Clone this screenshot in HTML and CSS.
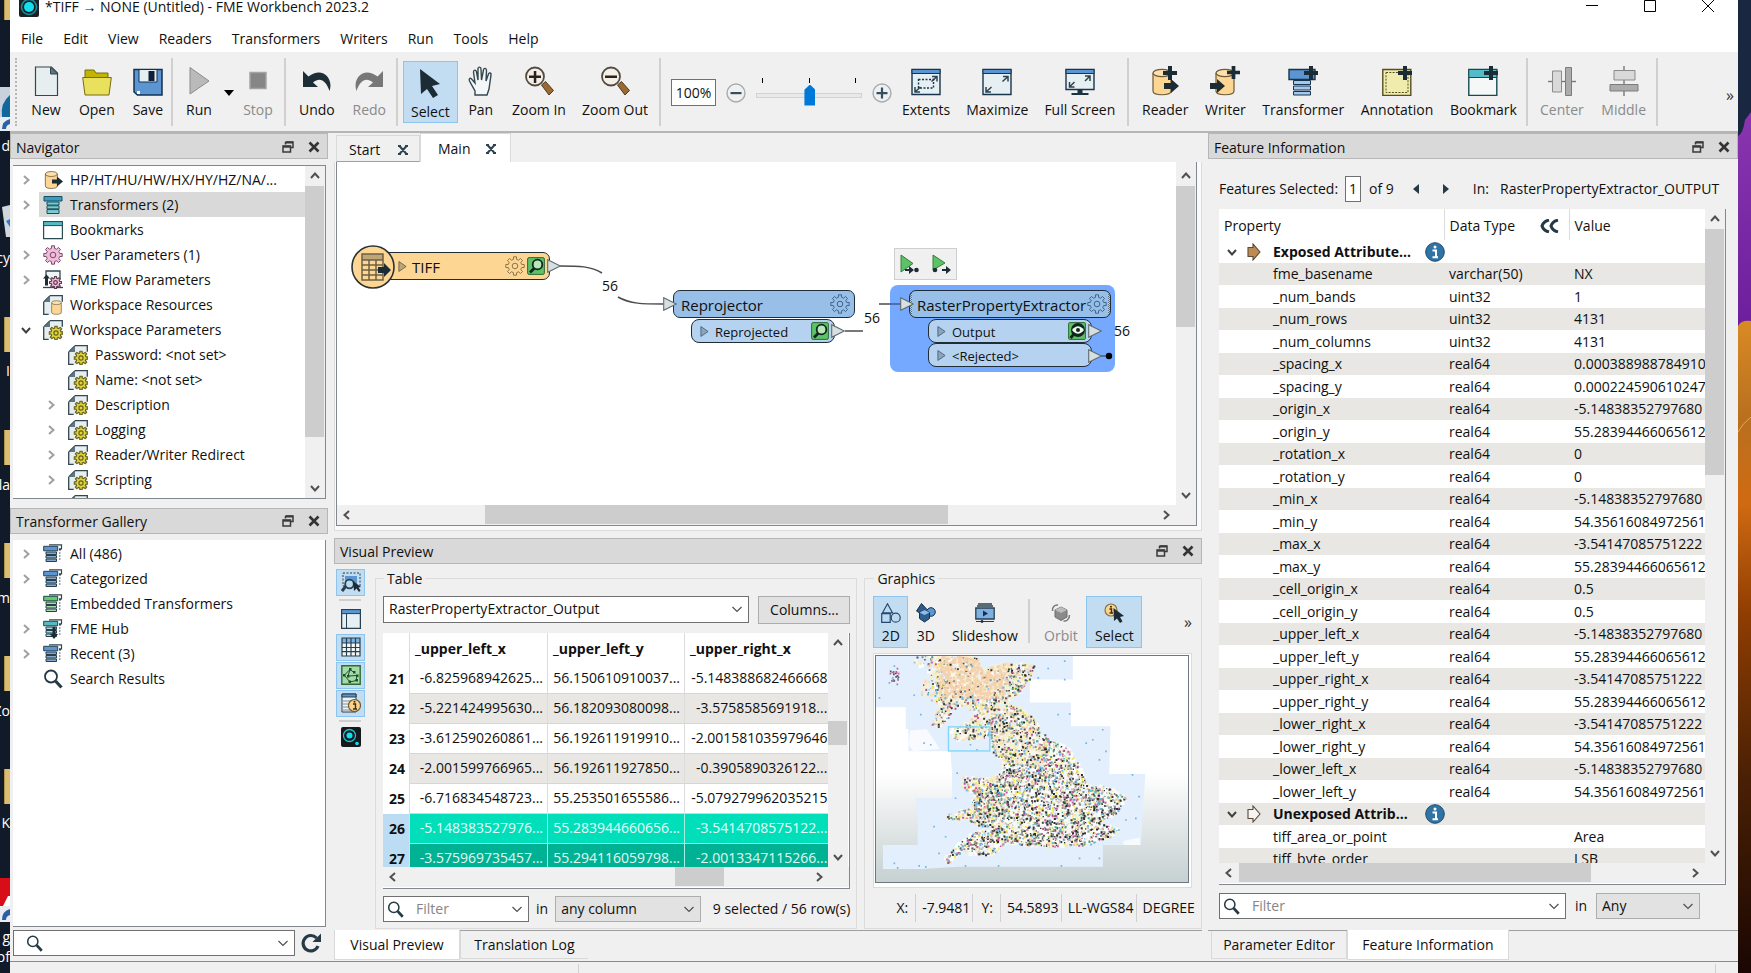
FILE: index.html
```html
<!DOCTYPE html>
<html lang="en">
<head>
<meta charset="utf-8">
<title>*TIFF → NONE (Untitled) - FME Workbench 2023.2</title>
<link rel="stylesheet" href="styles.css">
</head>
<body>
<svg class="sprite" aria-hidden="true">
  <symbol id="i-app" viewBox="0 0 20 20"><rect width="20" height="20" rx="2" fill="#15181c"/><circle cx="8.500" cy="8.500" r="6" fill="none" stroke="#19c5d3" stroke-width="1.300"/><circle cx="8.500" cy="8.500" r="3" fill="#12e0ee"/><circle cx="16" cy="16.500" r="1.800" fill="#12e0ee"/></symbol>
  <symbol id="i-logo" viewBox="0 0 20 20"><rect width="20" height="20" rx="2" fill="#1b2126"/><circle cx="10" cy="10" r="7.500" fill="none" stroke="#15909c" stroke-width="1.500"/><circle cx="10" cy="10" r="5" fill="#12e0ee"/></symbol>
  <symbol id="i-new" viewBox="0 0 30 30"><path d="M4 .7h16l6 6v22.600H4z" transform="translate(.5 .3)" fill="#e6eef0" stroke="#33474f" stroke-width="1.200"/><path d="M19.500 1v7h7z" fill="#5d7682" stroke="#33474f"/></symbol>
  <symbol id="i-open" viewBox="0 0 30 30"><path d="M3 4h9l2 3h12v6H3z" fill="#c2b500" stroke="#756d10"/><path d="M.7 11.500h28.600L27 29H3z" fill="#e9e15e" stroke="#756d10"/></symbol>
  <symbol id="i-save" viewBox="0 0 30 30"><path d="M1 3.500h28V29H4.500L1 26z" fill="#5b96d2" stroke="#14304f" stroke-width="1.500"/><path d="M6 3.500h18v12.500H6z" fill="#e6eef0" stroke="#14304f"/><path d="M15.500 5h6v10h-6z" fill="#0d2038"/><path d="M4 25h3v3H4z" fill="#fff"/></symbol>
  <symbol id="i-run" viewBox="0 0 30 30"><path d="M6 1.500v26.500L25 15z" fill="#bababa" stroke="#8b8b8b"/></symbol>
  <symbol id="i-stop" viewBox="0 0 30 30"><path d="M7 6.500h16v16H7z" fill="#868686" stroke="#a4a4a4" stroke-width="1.500"/></symbol>
  <symbol id="i-undo" viewBox="0 0 30 30"><path d="M1 5v16h15l-5-4.500c7-6 13-2 16.500 8.500C32 12 20 0 6.500 10.500z" fill="#1e2e36"/></symbol>
  <symbol id="i-redo" viewBox="0 0 30 30"><path d="M29 5v16H14l5-4.500C12 10.500 6 14.500 2.500 25-2 12 10 0 23.500 10.500z" fill="#777"/></symbol>
  <symbol id="i-cursor" viewBox="0 0 30 30"><path d="M5 1l1 25 6-5 6 9 5-3-6-9 8-2z" fill="#1c2c34"/></symbol>
  <symbol id="i-pan" viewBox="0 0 30 30"><path d="M9 29v-4L3.500 15c-1-3 1-3.500 2.500-1.500l3 3.500L7.500 6c0-2.500 2.500-2.500 3 0l1.500 8V3c0-2.500 3-2.500 3 0l.5 11L17.500 4c.5-2.500 3-2 3 .5L20 15l2.500-7c.8-2 3-1 2.500 1l-2 14-2 6z" fill="#f4f7f8" stroke="#33474f" stroke-width="1.400"/></symbol>
  <symbol id="i-zoomin" viewBox="0 0 30 30"><path d="M17.500 19l4-3.500 8 9-4.500 4.500z" fill="#9a6a35" stroke="#51381c"/><circle cx="11" cy="10.500" r="9" fill="#f2eee8" stroke="#544a40" stroke-width="1.800"/><path d="M5 9.500h12v2.500H5zM9.800 5h2.500v12H9.800z" fill="#2c211a"/></symbol>
  <symbol id="i-zoomout" viewBox="0 0 30 30"><path d="M17.500 19l4-3.500 8 9-4.500 4.500z" fill="#9a6a35" stroke="#51381c"/><circle cx="11" cy="10.500" r="9" fill="#f2eee8" stroke="#544a40" stroke-width="1.800"/><path d="M5 9.500h12v2.500H5z" fill="#2c211a"/></symbol>
  <symbol id="i-minus" viewBox="0 0 20 20"><circle cx="10" cy="10" r="9" fill="#f0f0f0" stroke="#a5adb0" stroke-width="1.400"/><path d="M4.500 9h11v2.200h-11z" fill="#34505f"/></symbol>
  <symbol id="i-plus" viewBox="0 0 20 20"><circle cx="10" cy="10" r="9" fill="#f0f0f0" stroke="#a5adb0" stroke-width="1.400"/><path d="M4.500 9h11v2.200h-11zM8.900 4.500h2.200v11H8.900z" fill="#34505f"/></symbol>
  <symbol id="i-winarrows" viewBox="0 0 30 30"><path d="M1 3.500h28v25H1z" fill="#e6eff2" stroke="#17354d" stroke-width="1.400"/><path d="M1 3.500h28v4H1z" fill="#5b96d2" stroke="#17354d"/><path d="M21 10.500h5v5M26 10.500l-5.500 5M4 21v5h5M4 26l5.500-5" fill="none" stroke="#2d434f" stroke-width="1.500"/></symbol>
  <symbol id="i-extents" viewBox="0 0 30 30"><use href="#i-winarrows"/><path d="M7.500 13.500h15v8.500h-15z" fill="none" stroke="#17354d" stroke-width="1.400" stroke-dasharray="2 1.500"/></symbol>
  <symbol id="i-full" viewBox="0 0 30 30"><path d="M1 3.500h28v20H1z" fill="#e6eff2" stroke="#17354d" stroke-width="1.400"/><path d="M1 3.500h28v4H1z" fill="#5b96d2" stroke="#17354d"/><path d="M20 10h5v5M25 10l-5 5M4.500 16v5h5M4.500 21l5-5" fill="none" stroke="#2d434f" stroke-width="1.500"/><path d="M12.500 24h5v3h6v2h-17v-2h6z" fill="#1c3442"/></symbol>
  <symbol id="i-cyl" viewBox="0 0 24 28"><path d="M2 5v18c0 5 18 5 18 0V5" fill="#fdd694" stroke="#6b5a3c" stroke-width="1.200"/><ellipse cx="11" cy="5" rx="9" ry="3.700" fill="#fde0ac" stroke="#6b5a3c" stroke-width="1.200"/></symbol>
  <symbol id="i-add" viewBox="0 0 14 14"><path d="M5 0h4v5h5v4H9v5H5V9H0V5h5z" fill="#1c2c34"/></symbol>
  <symbol id="i-reader" viewBox="0 0 30 30"><use href="#i-cyl" x="1" y="2" width="24" height="28"/><use href="#i-add" x="13" y="0" width="14" height="14"/><path d="M14 17h7v-4l8 7-8 7v-4h-7z" fill="#1c2c34"/></symbol>
  <symbol id="i-writer" viewBox="0 0 30 30"><use href="#i-cyl" x="4" y="2" width="24" height="28"/><use href="#i-add" x="17" y="0" width="13" height="13"/><path d="M0 17h7v-4l8 7-8 7v-4H0z" fill="#1c2c34"/></symbol>
  <symbol id="i-trans" viewBox="0 0 30 30"><path d="M1 3.500h26v10H1z" fill="#5b96d2" stroke="#17354d" stroke-width="1.400"/><path d="M5.500 14.500h17v4h-17zM5.500 20h17v4h-17zM5.500 25.500h17v3.500h-17z" fill="#a4c8ee" stroke="#17354d"/><use href="#i-add" x="16" y="0" width="14" height="14"/></symbol>
  <symbol id="i-annot" viewBox="0 0 30 30"><path d="M.8 3.500h28v26h-28z" fill="#f0ecae" stroke="#534f20" stroke-width="1.400"/><path d="M4 6.500h22v20H4z" fill="none" stroke="#534f20" stroke-dasharray="2 1.300"/><use href="#i-add" x="16" y="0" width="14" height="14"/></symbol>
  <symbol id="i-bookm" viewBox="0 0 30 30"><path d="M.8 3.500h28v26h-28z" fill="#f6f8f8" stroke="#174a50" stroke-width="1.400"/><path d="M.8 3.500h28v8h-28z" fill="#54bcc6" stroke="#174a50"/><use href="#i-add" x="16" y="0" width="14" height="14"/></symbol>
  <symbol id="i-center" viewBox="0 0 30 30"><path d="M1 15.500h28" stroke="#777" stroke-width="1.400"/><path d="M5.500 5h9v21h-9z" fill="#d9d9d9" stroke="#8b8b8b"/><path d="M18.500 1.500h6v28h-6z" fill="#acacac" stroke="#7c7c7c"/></symbol>
  <symbol id="i-middle" viewBox="0 0 30 30"><path d="M15 0v30" stroke="#777" stroke-width="1.400"/><path d="M5 4.500h21V14H5z" fill="#d9d9d9" stroke="#8b8b8b"/><path d="M1 18.500h28v6.500H1z" fill="#acacac" stroke="#7c7c7c"/></symbol>
  <symbol id="i-float" viewBox="0 0 12 12"><path d="M3.500 1h7.500v5.500H9M3.500 1v2.500" fill="none" stroke="#3a3a3a" stroke-width="1.500"/><path d="M3.500 1.500h7.500" stroke="#3a3a3a" stroke-width="2"/><path d="M1 5h7.500v6H1z" fill="none" stroke="#3a3a3a" stroke-width="1.500"/><path d="M1 5.700h7.500" stroke="#3a3a3a" stroke-width="2"/></symbol>
  <symbol id="i-x" viewBox="0 0 12 12"><path d="M1.500 1.500l9 9M10.500 1.500l-9 9" stroke="currentColor" stroke-width="2.600"/></symbol>
  <symbol id="i-tabx" viewBox="0 0 12 12"><path d="M2.500 2l7 8M9.500 2l-7 8M1 2h3M8 2h3M1 10h3M8 10h3" stroke="#2d434f" stroke-width="2"/></symbol>
  <symbol id="i-up" viewBox="0 0 12 12"><path d="M2 8l4-4.500L10 8" fill="none" stroke="#505050" stroke-width="2"/></symbol>
  <symbol id="i-down" viewBox="0 0 12 12"><path d="M2 4l4 4.500L10 4" fill="none" stroke="currentColor" stroke-width="2"/></symbol>
  <symbol id="i-left" viewBox="0 0 12 12"><path d="M8 2L3.500 6 8 10" fill="none" stroke="#505050" stroke-width="2"/></symbol>
  <symbol id="i-right" viewBox="0 0 12 12"><path d="M4 2l4.500 4L4 10" fill="none" stroke="currentColor" stroke-width="2"/></symbol>
  <symbol id="i-drop" viewBox="0 0 12 12"><path d="M1.500 4L6 8.500 10.500 4" fill="none" stroke="#505050" stroke-width="1.200"/></symbol>
  <symbol id="i-gear" viewBox="-10 -10 20 20"><path d="M6.600-1.600L9.200-1.500V1.500L6.600 1.600 5.800 3.500 7.500 5.500 5.500 7.500 3.500 5.800 1.600 6.600 1.500 9.200H-1.500L-1.600 6.600-3.500 5.800-5.500 7.500-7.500 5.500-5.800 3.500-6.600 1.600-9.200 1.500V-1.500L-6.600-1.600-5.800-3.500-7.500-5.500-5.500-7.500-3.500-5.800-1.600-6.600-1.500-9.200H1.500L1.600-6.600 3.500-5.800 5.500-7.500 7.500-5.500 5.800-3.500Z" stroke-linejoin="round"/><circle r="2.800"/></symbol>
  <symbol id="i-page" viewBox="0 0 20 20"><path d="M7 .7h12.300V19.300H.7V7z" fill="#e6eef0"/><path d="M7 .7h12.300v6M.7 7v12.300h5M7 .7L.7 7" fill="none" stroke="#33474f" stroke-width="1.300"/><path d="M7 1v6H1z" fill="#5d7682"/></symbol>
  <symbol id="i-wsp" viewBox="0 0 20 20"><use href="#i-page"/><use href="#i-gear" x="5.500" y="5.500" width="15" height="15" fill="#ded53c" stroke="#655f20" stroke-width="1.600"/></symbol>
  <symbol id="i-wsr" viewBox="0 0 20 20"><use href="#i-page"/><use href="#i-cyl" x="7" y="5" width="14" height="15"/></symbol>
  <symbol id="i-flow" viewBox="0 0 20 20"><path d="M3 8V1h14v8" fill="#eef3f4" stroke="#33474f" stroke-width="1.300"/><path d="M0 17.500h20" stroke="#33474f" stroke-width="1.300"/><path d="M3.500 4.500l3.500 4H5v7H2v-7H0z" fill="#1c2c34"/><use href="#i-gear" x="6" y="6" width="13" height="13" fill="#f0bcdc" stroke="#5d3a50" stroke-width="1.800"/></symbol>
  <symbol id="i-rdr" viewBox="0 0 20 20"><use href="#i-cyl" x="1" y="0" width="16" height="20"/><path d="M9 9.500h5v-3l6 5-6 5v-3H9z" fill="#1c2c34"/></symbol>
  <symbol id="i-tr1" viewBox="0 0 20 20"><path d="M1 1.500h18v4.500H1z" fill="#3a9cc0" stroke="#17505f"/><path d="M4 7h12v3H4zM4 10.800h12v3H4zM4 14.600h12v3.900H4z" fill="#7fcbd2" stroke="#17505f"/></symbol>
  <symbol id="i-bk" viewBox="0 0 20 20"><path d="M.6 1.600h18.800v17H.6z" fill="#fff" stroke="#2b4a52" stroke-width="1.200"/><path d="M.6 1.600h18.800v4H.6z" fill="#54bcc6" stroke="#2b4a52"/></symbol>
  <symbol id="i-trs" viewBox="0 0 20 20"><path d="M6 .8h12.500v4H16M16 6h2M16 9h1.500M16 12h1.500M16 15h1.500" fill="none" stroke="#33474f" stroke-width="1.200"/><path d="M.7 2.300h14v4.500H.7z" fill="var(--c1)" stroke="#26404f"/><path d="M3 8h10.500v2.500H3zM3 11.500h10.500V14H3zM3 15h10.500v2.500H3z" fill="var(--c2)" stroke="#26404f"/></symbol>
  <symbol id="i-search" viewBox="0 0 20 20"><path d="M12.500 12l6 6.500" stroke="#253a45" stroke-width="3.200"/><circle cx="8" cy="7.500" r="6" fill="none" stroke="#253a45" stroke-width="1.800"/></symbol>
  <symbol id="i-refresh" viewBox="0 0 20 20"><path d="M17 13a7.700 7.700 0 1 1-1.500-8" fill="none" stroke="#253a45" stroke-width="3.200"/><path d="M20 .5v8.500h-8.500z" fill="#253a45"/></symbol>
  <symbol id="i-mag" viewBox="0 0 18 18"><rect x=".6" y=".6" width="16.800" height="16.800" rx="1.500" fill="#5bc266" stroke="#2f6b35"/><path d="M7.500 11l-4.500 4.500" stroke="#12251c" stroke-width="2.800"/><circle cx="10.500" cy="7.500" r="4.800" fill="#b6e6bb" stroke="#12251c" stroke-width="1.800"/></symbol>
  <symbol id="i-eye" viewBox="0 0 18 18"><rect x=".6" y=".6" width="16.800" height="16.800" rx="1" fill="#5bc266" stroke="#2f6b35"/><path d="M6 12l-3.500 4" stroke="#12251c" stroke-width="2.800"/><circle cx="10" cy="8" r="7" fill="#12251c"/><path d="M4 8q6-7.500 12 0q-6 7.500-12 0z" fill="#e8fbe9"/><circle cx="10" cy="8" r="2" fill="#12251c"/></symbol>
  <symbol id="i-tri" viewBox="0 0 10 14"><path d="M1 1.500v11L9 7z"/></symbol>
  <symbol id="i-port" viewBox="0 0 14 14"><path d="M.7.7v12.600L13.300 7z" fill="#d8dfe0" stroke="#5d6c70" stroke-width="1.100"/></symbol>
  <symbol id="i-runto" viewBox="0 0 20 20"><path d="M1 1v17l12-8.500z" fill="#5bc266" stroke="#3c7a42"/><path d="M5 15h4v-3l5 4-5 4v-3H5z" fill="#1c2c34"/><circle cx="16.500" cy="16" r="2.300" fill="#1c2c34"/></symbol>
  <symbol id="i-runfrom" viewBox="0 0 20 20"><path d="M2 1v15l12-7z" fill="#5bc266" stroke="#3c7a42"/><circle cx="4" cy="16" r="2.300" fill="#1c2c34"/><path d="M11 15h4v-3l5 4-5 4v-3h-4z" fill="#1c2c34"/></symbol>
  <symbol id="i-pick" viewBox="0 0 20 20"><path d="M4 4h12v8H4z" fill="#5b96d2"/><path d="M2 1h17v13H2z" fill="none" stroke="#26404f" stroke-dasharray="2 1.500"/><path d="M5 14l-4 5" stroke="#26404f" stroke-width="3"/><circle cx="8.500" cy="12" r="4.300" fill="#bcd9ee" stroke="#26404f" stroke-width="1.800"/><path d="M12 9l1 10 2.500-2.500L18 20l1.500-1.500-2-3 2.500-.5z" fill="#1c2c34"/></symbol>
  <symbol id="i-pane" viewBox="0 0 20 20"><path d="M.6.600h18.800v18.800H.6z" fill="#e6eff2" stroke="#26404f" stroke-width="1.300"/><path d="M.6.600h18.800v4H.6z" fill="#5b96d2" stroke="#26404f"/><path d="M5.500 5v14" stroke="#26404f"/></symbol>
  <symbol id="i-grid" viewBox="0 0 20 20"><path d="M1 1h18v18H1z" fill="#f6f8f8"/><path d="M1 1h18v5H1z" fill="#7eb0e2"/><path d="M1 1h18v18H1zM1 6h18M1 10.500h18M1 14.700h18M5.500 1v18M10 1v18M14.500 1v18" fill="none" stroke="#26404f" stroke-width="1.200"/></symbol>
  <symbol id="i-gfx" viewBox="0 0 20 20"><path d="M.8.800h18.400v18.400H.8z" fill="#a3dba8" stroke="#2f6b35" stroke-width="1.400"/><path d="M3 10.500l6-6 4 3M9 4.500L7 11l9-.5-1 5-6 1.500-5.500-6.500" fill="none" stroke="#20502a" stroke-width="1"/><path d="M2 9h2.500v2.500H2zM8 3h2.500v2.500H8zM12 6h2.500v2.500H12zM15 9.500h2.500V12H15zM14.500 14H17v2.500h-2.500zM7.500 15.500H10V18H7.500zM6 10h2.500v2.500H6z" fill="#20502a"/></symbol>
  <symbol id="i-info" viewBox="0 0 20 20"><path d="M1 1h14v18H1z" fill="#f0f3f5" stroke="#26404f"/><path d="M1 1h14v3H1z" fill="#5b96d2" stroke="#26404f"/><path d="M2 8h8M2 11h6M2 14h6M2 17h8" stroke="#7c8c93"/><circle cx="13.500" cy="12.500" r="6" fill="#fbd38b" stroke="#6b5a3c" stroke-width="1.200"/><path d="M12 11h2.500v5M12 16h4" fill="none" stroke="#3a2e14" stroke-width="1.400"/><circle cx="13.500" cy="8.800" r="1" fill="#3a2e14"/></symbol>
  <symbol id="i-2d" viewBox="0 0 20 20"><path d="M6.500.8l5 9h-10zM.7 10.700h8.500v8.600H.7z" fill="#bcd9f2" stroke="#26486b" stroke-width="1.200"/><circle cx="14.700" cy="14.700" r="4.500" fill="#bcd9f2" stroke="#26486b" stroke-width="1.200"/></symbol>
  <symbol id="i-3d" viewBox="0 0 20 20"><circle cx="15" cy="9" r="4.300" fill="#5b96d2" stroke="#17304a"/><path d="M5.500.5l5.500 6-5 5L.5 8z" fill="#2d5c8c" stroke="#17304a"/><path d="M8.500 7l5 2.500v6l-5 3.500-5-3.500v-6z" fill="#2f5f8e" stroke="#17304a"/><path d="M8.500 7l5 2.500-5 2.500-5-2.500z" fill="#8cbcf0"/></symbol>
  <symbol id="i-slide" viewBox="0 0 20 20"><path d="M3 1h14M2 3h16" stroke="#26404f" stroke-width="1.300"/><path d="M.8 5h18.400v11H.8z" fill="#7eb0e2" stroke="#26404f" stroke-width="1.300"/><path d="M8 7.500v6l5-3z" fill="#17304a"/><path d="M1 18.500h18" stroke="#26404f"/><circle cx="7" cy="18.500" r="1.400" fill="#17304a"/></symbol>
  <symbol id="i-orbit" viewBox="0 0 20 20"><path d="M10 4l6 3v7l-6 3.500L4 14V7z" fill="#8a8a8a" stroke="#6f6f6f"/><path d="M10 4l6 3-6 3-6-3z" fill="#bcbcbc"/><path d="M1.500 8C1 4 4 1.500 7 2M18.500 12c0 4-3 6.500-6 6" fill="none" stroke="#777" stroke-width="1.500"/></symbol>
  <symbol id="i-isel" viewBox="0 0 20 20"><circle cx="7" cy="7" r="6" fill="#fbd38b" stroke="#8a744a" stroke-width="1.200"/><path d="M5.500 6h2v4M5.500 10h3.500" fill="none" stroke="#3a2e14" stroke-width="1.400"/><circle cx="7" cy="3.700" r="1" fill="#3a2e14"/><path d="M9.500 5l.5 13 3-2.500 3 4.500 2.500-1.500-2.500-4.500 4-1z" fill="#1c2c34"/></symbol>
  <symbol id="i-infob" viewBox="0 0 20 20"><circle cx="10" cy="10" r="9.300" fill="#2f74a5" stroke="#1c4a6c"/><path d="M7.500 8.500H11V15M7.500 15.200H13" fill="none" stroke="#fff" stroke-width="2"/><circle cx="10" cy="5" r="1.500" fill="#fff"/></symbol>
  <symbol id="i-exp" viewBox="0 0 14 18"><path d="M1 4.500h5V1l7 8-7 8v-3.500H1z" stroke="#5a4a38" stroke-width="1.100"/></symbol>
</svg>

<div class="desktop">
  <aside class="strip-left" aria-hidden="true">
    <span class="folder f1"></span><span class="folder f2"></span><span class="folder f3"></span>
    <span class="folder f4"></span><span class="folder f5"></span><span class="folder f6"></span>
    <svg class="badge b1" viewBox="0 0 10 44"><path d="M0 0h10v30H0z" fill="#c9d2dc"/><path d="M10 8Q0 16 2 30h8z" fill="#12679c"/><path d="M0 30h10v14H0z" fill="#e9edf2"/><path d="M10 32Q2 34 2 42h4q0-4 4-5z" fill="#2d5fa5"/></svg>
    <svg class="badge b2" viewBox="0 0 10 32"><path d="M2 2l8-2v32H6z" fill="#cfd6dc"/><path d="M6 16l4-2v8z" fill="#2d7bd0"/></svg>
    <svg class="badge b3" viewBox="0 0 10 44"><path d="M0 0h10v28H0z" fill="#d80d18"/><path d="M3 28l5-10h2v10z" fill="#fff"/><path d="M0 28h10v16H0z" fill="#e9edf2"/><path d="M10 31Q2 33 2 42h4q0-4 4-5z" fill="#2d5fa5"/></svg>
    <span class="dl t1">d</span><span class="dl t2">cy</span><span class="dl t3">I</span><span class="dl t4">la</span><span class="dl t5">m</span><span class="dl t6">Zo</span><span class="dl t7">K</span><span class="dl t8">g</span><span class="dl t9">of</span>
  </aside>

  <div class="window">
    <header class="titlebar">
      <svg class="ic20"><use href="#i-logo"/></svg>
      <h1>*TIFF → NONE (Untitled) - FME Workbench 2023.2</h1>
      <div class="winbtns">
        <button aria-label="Minimize"><svg viewBox="0 0 12 14"><path d="M0 5.500h12" stroke="#000"/></svg></button>
        <button aria-label="Restore"><svg viewBox="0 0 12 14"><path d="M.5.500h11v11H.5z" fill="none" stroke="#000"/></svg></button>
        <button aria-label="Close"><svg viewBox="0 0 12 14"><path d="M0 0l12 12M12 0L0 12" stroke="#000"/></svg></button>
      </div>
    </header>
    <nav class="menu">
      <button>File</button><button>Edit</button><button>View</button><button>Readers</button><button>Transformers</button><button>Writers</button><button>Run</button><button>Tools</button><button>Help</button>
    </nav>

    <div class="toolbar">
      <div class="group g-file">
        <button><svg><use href="#i-new"/></svg>New</button>
        <button><svg><use href="#i-open"/></svg>Open</button>
        <button><svg><use href="#i-save"/></svg>Save</button>
      </div>
      <div class="group g-run">
        <button><svg><use href="#i-run"/></svg>Run</button>
        <button class="caret" aria-label="Run options"><svg class="caret-ic" viewBox="0 0 10 6"><path d="M0 0h10L5 6z"/></svg></button>
        <button disabled><svg><use href="#i-stop"/></svg>Stop</button>
      </div>
      <div class="group g-undo">
        <button><svg><use href="#i-undo"/></svg>Undo</button>
        <button disabled><svg><use href="#i-redo"/></svg>Redo</button>
      </div>
      <div class="group g-nav">
        <button class="on"><svg><use href="#i-cursor"/></svg>Select</button>
        <button><svg><use href="#i-pan"/></svg>Pan</button>
        <button><svg><use href="#i-zoomin"/></svg>Zoom In</button>
        <button><svg><use href="#i-zoomout"/></svg>Zoom Out</button>
      </div>
      <div class="group g-zoom">
        <input class="pct" type="text" value="100%" aria-label="Zoom level">
        <button class="round" aria-label="Zoom out"><svg class="ic20"><use href="#i-minus"/></svg></button>
        <div class="slider"><div class="ticks"><i></i><i></i><i></i></div><input type="range" aria-label="Zoom" min="0" max="100" value="51"></div>
        <button class="round" aria-label="Zoom in"><svg class="ic20"><use href="#i-plus"/></svg></button>
        <button><svg><use href="#i-extents"/></svg>Extents</button>
        <button><svg><use href="#i-winarrows"/></svg>Maximize</button>
        <button><svg><use href="#i-full"/></svg>Full Screen</button>
      </div>
      <div class="group g-add">
        <button><svg><use href="#i-reader"/></svg>Reader</button>
        <button><svg><use href="#i-writer"/></svg>Writer</button>
        <button><svg><use href="#i-trans"/></svg>Transformer</button>
        <button><svg><use href="#i-annot"/></svg>Annotation</button>
        <button><svg><use href="#i-bookm"/></svg>Bookmark</button>
      </div>
      <div class="group g-align">
        <button disabled><svg><use href="#i-center"/></svg>Center</button>
        <button disabled><svg><use href="#i-middle"/></svg>Middle</button>
      </div>
      <button class="more" aria-label="More tools">»</button>
    </div>

    <main class="docks">
      <section class="col left">
        <header class="dock-head"><h2>Navigator</h2><button aria-label="Float"><svg><use href="#i-float"/></svg></button><button aria-label="Close"><svg><use href="#i-x"/></svg></button></header>
        <div class="panel nav-panel">
          <ul class="tree">
            <li><svg class="ch"><use href="#i-right"/></svg><svg class="ic20"><use href="#i-rdr"/></svg><span>HP/HT/HU/HW/HX/HY/HZ/NA/...</span></li>
            <li class="sel"><svg class="ch"><use href="#i-right"/></svg><svg class="ic20"><use href="#i-tr1"/></svg><span>Transformers (2)</span></li>
            <li><i class="ch"></i><svg class="ic20"><use href="#i-bk"/></svg><span>Bookmarks</span></li>
            <li><svg class="ch"><use href="#i-right"/></svg><svg class="ic20 pink"><use href="#i-gear"/></svg><span>User Parameters (1)</span></li>
            <li><svg class="ch"><use href="#i-right"/></svg><svg class="ic20"><use href="#i-flow"/></svg><span>FME Flow Parameters</span></li>
            <li><i class="ch"></i><svg class="ic20"><use href="#i-wsr"/></svg><span>Workspace Resources</span></li>
            <li><svg class="ch open"><use href="#i-down"/></svg><svg class="ic20"><use href="#i-wsp"/></svg><span>Workspace Parameters</span></li>
            <li class="sub"><i class="ch"></i><svg class="ic20"><use href="#i-wsp"/></svg><span>Password: &lt;not set&gt;</span></li>
            <li class="sub"><i class="ch"></i><svg class="ic20"><use href="#i-wsp"/></svg><span>Name: &lt;not set&gt;</span></li>
            <li class="sub"><svg class="ch"><use href="#i-right"/></svg><svg class="ic20"><use href="#i-wsp"/></svg><span>Description</span></li>
            <li class="sub"><svg class="ch"><use href="#i-right"/></svg><svg class="ic20"><use href="#i-wsp"/></svg><span>Logging</span></li>
            <li class="sub"><svg class="ch"><use href="#i-right"/></svg><svg class="ic20"><use href="#i-wsp"/></svg><span>Reader/Writer Redirect</span></li>
            <li class="sub"><svg class="ch"><use href="#i-right"/></svg><svg class="ic20"><use href="#i-wsp"/></svg><span>Scripting</span></li>
            <li class="sub"><i class="ch"></i><svg class="ic20"><use href="#i-wsp"/></svg></li>
          </ul>
          <div class="sb v sb-nav"><svg><use href="#i-up"/></svg><div class="track"><div class="thumb"></div></div><svg><use href="#i-down"/></svg></div>
        </div>
        <header class="dock-head second"><h2>Transformer Gallery</h2><button aria-label="Float"><svg><use href="#i-float"/></svg></button><button aria-label="Close"><svg><use href="#i-x"/></svg></button></header>
        <div class="panel gal-panel">
          <ul class="tree">
            <li><svg class="ch"><use href="#i-right"/></svg><svg class="ic20 blue"><use href="#i-trs"/></svg><span>All (486)</span></li>
            <li><svg class="ch"><use href="#i-right"/></svg><svg class="ic20 blue"><use href="#i-trs"/></svg><span>Categorized</span></li>
            <li><i class="ch"></i><svg class="ic20 green"><use href="#i-trs"/></svg><span>Embedded Transformers</span></li>
            <li><svg class="ch"><use href="#i-right"/></svg><svg class="ic20 teal"><use href="#i-trs"/><path d="M9.500 8h3v7h2.500l-4 5-4-5h2.500z" fill="#1c2c34"/></svg><span>FME Hub</span></li>
            <li><svg class="ch"><use href="#i-right"/></svg><svg class="ic20 blue"><use href="#i-trs"/></svg><span>Recent (3)</span></li>
            <li><i class="ch"></i><svg class="ic20"><use href="#i-search"/></svg><span>Search Results</span></li>
          </ul>
        </div>
        <div class="gal-search">
          <label class="field"><svg class="ic20"><use href="#i-search"/></svg><input type="text" aria-label="Search transformers"><svg class="dr"><use href="#i-drop"/></svg></label>
          <button aria-label="Refresh"><svg class="ic20"><use href="#i-refresh"/></svg></button>
        </div>
      </section>

      <section class="col mid">
        <div class="doc-tabs">
          <button class="doc-tab start">Start <svg><use href="#i-tabx"/></svg></button>
          <button class="doc-tab active">Main <svg><use href="#i-tabx"/></svg></button>
        </div>
        <div class="canvas-frame"><div class="canvas-pane">
          <div class="canvas">
            <svg class="wires"><path d="M222 104c20 0 32 0 43 7M281 135c12 7 25 7 45 7M508 169h18M542 142h12" fill="none" stroke="#4c4c4c" stroke-width="1.500"/></svg>
            <div class="node tiff"><svg class="ic-tri brown"><use href="#i-tri"/></svg><span>TIFF</span><svg class="ic20 gear-o"><use href="#i-gear"/></svg><svg class="ic18"><use href="#i-mag"/></svg></div>
            <svg class="disc" viewBox="0 0 44 44"><circle cx="22" cy="22" r="21" fill="#fdd694" stroke="#2b3236" stroke-width="1.600"/><path d="M11 9h21v6H11z" fill="#bda778"/><path d="M11 9h21v26H11zM11 15h21M11 20h21M11 25h21M11 30h21M18 15v20M25 15v20" fill="none" stroke="#6e6045" stroke-width="1.500"/><path d="M27 22h6v-4l7 7-7 7v-4h-6z" fill="#1c2c34"/></svg>
            <svg class="port p1"><use href="#i-port"/></svg>
            <span class="cnt c1">56</span>
            <div class="node rep"><span>Reprojector</span><svg class="ic20 gear-b"><use href="#i-gear"/></svg></div>
            <svg class="port p2"><use href="#i-port"/></svg>
            <div class="node out rep-out"><svg class="ic-tri"><use href="#i-tri"/></svg><span>Reprojected</span><svg class="ic18"><use href="#i-mag"/></svg></div>
            <svg class="port p3"><use href="#i-port"/></svg>
            <span class="cnt c2">56</span>
            <div class="mini"><button aria-label="Run to this"><svg class="ic20"><use href="#i-runto"/></svg></button><button aria-label="Run from this"><svg class="ic20"><use href="#i-runfrom"/></svg></button></div>
            <div class="halo"></div>
            <svg class="wires"><path d="M553 142h12M764 194h8" stroke="#3b5d92" stroke-width="1.500"/><circle cx="772" cy="194" r="3.200"/></svg>
            <div class="node rpe"><span>RasterPropertyExtractor</span><svg class="ic20 gear-b"><use href="#i-gear"/></svg></div>
            <svg class="port p4"><use href="#i-port"/></svg>
            <div class="node out rpe-out"><svg class="ic-tri"><use href="#i-tri"/></svg><span>Output</span><svg class="ic18"><use href="#i-eye"/></svg></div>
            <div class="node out rpe-rej"><svg class="ic-tri"><use href="#i-tri"/></svg><span>&lt;Rejected&gt;</span></div>
            <svg class="port p5"><use href="#i-port"/></svg>
            <svg class="port p6"><use href="#i-port"/></svg>
            <span class="cnt c3">56</span>
          </div>
          <div class="sb v sb-cv"><svg><use href="#i-up"/></svg><div class="track"><div class="thumb"></div></div><svg><use href="#i-down"/></svg></div>
          <div class="sb h sb-ch"><svg><use href="#i-left"/></svg><div class="track"><div class="thumb"></div></div><svg><use href="#i-right"/></svg></div>
        </div></div>

        <header class="dock-head third"><h2>Visual Preview</h2><button aria-label="Float"><svg><use href="#i-float"/></svg></button><button aria-label="Close"><svg><use href="#i-x"/></svg></button></header>
        <div class="preview">
          <div class="vtools">
            <button class="on" aria-label="Inspect selection"><svg class="ic20"><use href="#i-pick"/></svg></button><hr>
            <button aria-label="Display control"><svg class="ic20"><use href="#i-pane"/></svg></button>
            <button class="on" aria-label="Table"><svg class="ic20"><use href="#i-grid"/></svg></button>
            <button class="on" aria-label="Graphics"><svg class="ic20"><use href="#i-gfx"/></svg></button>
            <button class="on" aria-label="Feature information"><svg class="ic20"><use href="#i-info"/></svg></button><hr>
            <button class="app" aria-label="Data Inspector"><svg class="ic20"><use href="#i-app"/></svg></button>
          </div>
          <fieldset class="box tbl"><legend>Table</legend>
            <div class="row1">
              <div class="combo white"><select aria-label="Feature type"><option>RasterPropertyExtractor_Output</option></select><svg class="dr"><use href="#i-drop"/></svg></div>
              <button class="push">Columns...</button>
            </div>
            <div class="grid-box">
              <div class="clip"><table class="grid">
                <colgroup><col class="cn"><col class="ca"><col class="cb"><col class="cc"></colgroup>
                <thead><tr><th></th><th>_upper_left_x</th><th>_upper_left_y</th><th>_upper_right_x</th></tr></thead>
                <tbody>
                <tr><th>21</th><td>-6.825968942625...</td><td>56.150610910037...</td><td>-5.148388682466668</td></tr>
                <tr><th>22</th><td>-5.221424995630...</td><td>56.182093080098...</td><td>-3.5758585691918...</td></tr>
                <tr><th>23</th><td>-3.612590260861...</td><td>56.192611919910...</td><td>-2.001581035979646</td></tr>
                <tr><th>24</th><td>-2.001599766965...</td><td>56.192611927850...</td><td>-0.3905890326122...</td></tr>
                <tr><th>25</th><td>-6.716834548723...</td><td>55.253501655586...</td><td>-5.079279962035215</td></tr>
                <tr class="s1"><th>26</th><td>-5.148383527976...</td><td>55.283944660656...</td><td>-3.5414708575122...</td></tr>
                <tr class="s2"><th>27</th><td>-3.575969735457...</td><td>55.294116059798...</td><td>-2.0013347115266...</td></tr>
                </tbody>
              </table></div>
              <div class="sb v sb-tv"><svg><use href="#i-up"/></svg><div class="track"><div class="thumb"></div></div><svg><use href="#i-down"/></svg></div>
              <div class="sb h sb-th"><svg><use href="#i-left"/></svg><div class="track"><div class="thumb"></div></div><svg><use href="#i-right"/></svg></div>
            </div>
            <div class="row3">
              <label class="field"><svg class="ic20"><use href="#i-search"/></svg><input type="text" placeholder="Filter" aria-label="Filter rows"><svg class="dr"><use href="#i-drop"/></svg></label>
              <span>in</span>
              <div class="combo"><select aria-label="Filter column"><option>any column</option></select><svg class="dr"><use href="#i-drop"/></svg></div>
              <span class="count">9 selected / 56 row(s)</span>
            </div>
          </fieldset>
          <fieldset class="box gfx"><legend>Graphics</legend>
            <div class="gtools">
              <button class="on"><svg class="ic20"><use href="#i-2d"/></svg>2D</button>
              <button><svg class="ic20"><use href="#i-3d"/></svg>3D</button>
              <button class="slide"><svg class="ic20"><use href="#i-slide"/></svg>Slideshow</button>
              <i class="vsep"></i>
              <button disabled><svg class="ic20"><use href="#i-orbit"/></svg>Orbit</button>
              <button class="on wide"><svg class="ic20"><use href="#i-isel"/></svg>Select</button>
              <button class="more" aria-label="More">»</button>
            </div>
            <div class="map-frame">
              <svg class="map" id="map" viewBox="47 377 942 676" preserveAspectRatio="none" role="img" aria-label="Map of Great Britain raster tiles">
                <path fill="#e3effd" d="M47 377H642V447H512V516H636V587H756L752 730H861L848 942H733V1007H295L185 1014H68V942H173V860L165 801H277V730L272 662H145V595H137V530H47Z"/>
                <path fill="#f8fafd" d="M150 600l50-5 20 30 20 30-80 7-15-20zM795 930l50-10v22h-50z"/>
                <g id="land"></g>
                <rect x="266" y="589" width="125" height="72" fill="none" stroke="#7fd6fb" stroke-width="4"/>
              </svg>
            </div>
            <div class="coords"><span class="k">X:</span><span class="n">-7.9481</span><span class="k">Y:</span><span class="n">54.5893</span><span>LL-WGS84</span><span>DEGREE</span></div>
          </fieldset>
        </div>
        <div class="bottom-tabs mid-tabs"><button class="btab active">Visual Preview</button><button class="btab log">Translation Log</button></div>
      </section>

      <section class="col right">
        <header class="dock-head"><h2>Feature Information</h2><button aria-label="Float"><svg><use href="#i-float"/></svg></button><button aria-label="Close"><svg><use href="#i-x"/></svg></button></header>
        <div class="feat-bar">
          <label for="fnum">Features Selected:</label><input id="fnum" type="text" value="1"><span>of 9</span>
          <button class="prev" aria-label="Previous"><svg viewBox="0 0 6 10"><path d="M6 0v10L0 5z" fill="#253a45"/></svg></button>
          <button aria-label="Next"><svg viewBox="0 0 6 10"><path d="M0 0v10l6-5z" fill="#253a45"/></svg></button>
          <span class="in">In:</span><span>RasterPropertyExtractor_OUTPUT</span>
        </div>
        <div class="prop-box">
          <div class="clip"><table class="props">
            <colgroup><col class="cp"><col class="ct"><col class="cv"></colgroup>
            <thead><tr><th>Property</th><th><div class="dt">Data Type<button aria-label="Collapse"><svg viewBox="0 0 20 14"><path d="M9 1C5 2 3 4 2 7c1 3 3 5 7 6M18 1c-4 1-6 3-7 6 1 3 3 5 7 6" fill="none" stroke="#253a45" stroke-width="3"/></svg></button></div></th><th>Value</th></tr></thead>
            <tbody>
            <tr class="cat"><td colspan="3"><div><svg class="ch open"><use href="#i-down"/></svg><svg class="ex filled"><use href="#i-exp"/></svg><b>Exposed Attribute...</b><svg class="ic20"><use href="#i-infob"/></svg></div></td></tr>
            <tr><td>fme_basename</td><td>varchar(50)</td><td>NX</td></tr>
            <tr><td>_num_bands</td><td>uint32</td><td>1</td></tr>
            <tr><td>_num_rows</td><td>uint32</td><td>4131</td></tr>
            <tr><td>_num_columns</td><td>uint32</td><td>4131</td></tr>
            <tr><td>_spacing_x</td><td>real64</td><td>0.000388988784910</td></tr>
            <tr><td>_spacing_y</td><td>real64</td><td>0.000224590610247</td></tr>
            <tr><td>_origin_x</td><td>real64</td><td>-5.14838352797680</td></tr>
            <tr><td>_origin_y</td><td>real64</td><td>55.28394466065612</td></tr>
            <tr><td>_rotation_x</td><td>real64</td><td>0</td></tr>
            <tr><td>_rotation_y</td><td>real64</td><td>0</td></tr>
            <tr><td>_min_x</td><td>real64</td><td>-5.14838352797680</td></tr>
            <tr><td>_min_y</td><td>real64</td><td>54.35616084972561</td></tr>
            <tr><td>_max_x</td><td>real64</td><td>-3.54147085751222</td></tr>
            <tr><td>_max_y</td><td>real64</td><td>55.28394466065612</td></tr>
            <tr><td>_cell_origin_x</td><td>real64</td><td>0.5</td></tr>
            <tr><td>_cell_origin_y</td><td>real64</td><td>0.5</td></tr>
            <tr><td>_upper_left_x</td><td>real64</td><td>-5.14838352797680</td></tr>
            <tr><td>_upper_left_y</td><td>real64</td><td>55.28394466065612</td></tr>
            <tr><td>_upper_right_x</td><td>real64</td><td>-3.54147085751222</td></tr>
            <tr><td>_upper_right_y</td><td>real64</td><td>55.28394466065612</td></tr>
            <tr><td>_lower_right_x</td><td>real64</td><td>-3.54147085751222</td></tr>
            <tr><td>_lower_right_y</td><td>real64</td><td>54.35616084972561</td></tr>
            <tr><td>_lower_left_x</td><td>real64</td><td>-5.14838352797680</td></tr>
            <tr><td>_lower_left_y</td><td>real64</td><td>54.35616084972561</td></tr>
            <tr class="cat"><td colspan="3"><div><svg class="ch open"><use href="#i-down"/></svg><svg class="ex"><use href="#i-exp"/></svg><b>Unexposed Attrib...</b><svg class="ic20"><use href="#i-infob"/></svg></div></td></tr>
            <tr><td>tiff_area_or_point</td><td></td><td>Area</td></tr>
            <tr><td>tiff_byte_order</td><td></td><td>LSB</td></tr>
            </tbody>
          </table></div>
          <div class="sb v sb-pv"><svg><use href="#i-up"/></svg><div class="track"><div class="thumb"></div></div><svg><use href="#i-down"/></svg></div>
          <div class="sb h sb-ph"><svg><use href="#i-left"/></svg><div class="track"><div class="thumb"></div></div><svg><use href="#i-right"/></svg></div>
        </div>
        <div class="feat-filter">
          <label class="field"><svg class="ic20"><use href="#i-search"/></svg><input type="text" placeholder="Filter" aria-label="Filter properties"><svg class="dr"><use href="#i-drop"/></svg></label>
          <span>in</span>
          <div class="combo"><select aria-label="Filter scope"><option>Any</option></select><svg class="dr"><use href="#i-drop"/></svg></div>
        </div>
        <div class="bottom-tabs feat-tabs"><button class="btab pe">Parameter Editor</button><button class="btab active fi">Feature Information</button></div>
      </section>
    </main>
    <footer class="status"><i></i><i></i></footer>
  </div>

  <svg class="strip-right" viewBox="0 0 13 973" preserveAspectRatio="none" aria-hidden="true">
    <defs><linearGradient id="or" x1="0" y1="0" x2="0" y2="1"><stop offset="0" stop-color="#d98a25"/><stop offset=".15" stop-color="#b8701f"/><stop offset=".28" stop-color="#d06a12"/><stop offset=".45" stop-color="#8f3d02"/><stop offset=".7" stop-color="#4a2004"/><stop offset="1" stop-color="#1a0703"/></linearGradient><linearGradient id="pu" x1="0" y1="0" x2="0" y2="1"><stop offset="0" stop-color="#8a35b0"/><stop offset="1" stop-color="#6c1f9c"/></linearGradient></defs>
    <path d="M0 0h13v140H0z" fill="#1a2740"/><path d="M0 136Q5 134 7 120l6-8v215H0z" fill="url(#pu)"/><path d="M0 326q3-6 13-5v652H0z" fill="url(#or)"/><path d="M0 432q4-8 13-15" fill="none" stroke="#f0a050"/>
  </svg>
</div>
<script src="map.js"></script>
</body>
</html>
```
FILE: styles.css
```css
* { box-sizing: border-box; }
html, body { height: 100%; }
body { margin: 0; font: 14px/20px "Open Sans", "Noto Sans", sans-serif; color: #101010; background: #111a28; overflow: hidden; }
button, input, select { font: inherit; color: inherit; margin: 0; padding: 0; border: 0; background: none; border-radius: 0; }
input, select { outline: 0; min-width: 0; }
h1, h2, ul, fieldset, legend { margin: 0; padding: 0; font: inherit; list-style: none; border: 0; min-width: 0; }
svg { display: block; flex: none; }
.sprite { position: absolute; width: 0; height: 0; }
.ic20 { width: 20px; height: 20px; }
.ic18 { width: 18px; height: 18px; }
.clip { overflow: hidden; min-width: 0; min-height: 0; }

.desktop { display: grid; grid-template-columns: 10px minmax(0, 1fr) 13px; height: 100vh; }
.strip-left { position: relative; overflow: hidden; background: #111a28; }
.strip-right { width: 13px; height: 100%; }
.folder { position: absolute; left: 4px; width: 8px; height: 35px; background: #d9bd72; border-left: 1px solid #b2934a; }
.f1 { top: -15px; } .f2 { top: 317px; } .f3 { top: 430px; } .f4 { top: 543px; } .f5 { top: 656px; } .f6 { top: 769px; }
.badge { position: absolute; left: 0; width: 10px; }
.b1 { top: 87px; height: 44px; } .b2 { top: 205px; height: 32px; } .b3 { top: 878px; height: 44px; }
.dl { position: absolute; right: 0; color: #fff; }
.t1 { top: 136px; } .t2 { top: 248px; } .t3 { top: 361px; } .t4 { top: 475px; } .t5 { top: 588px; } .t6 { top: 701px; } .t7 { top: 813px; } .t8 { top: 927px; } .t9 { top: 947px; }

.window { display: flex; flex-direction: column; min-width: 0; min-height: 0; background: #f0f0f0; }
.titlebar { display: flex; align-items: center; height: 26px; padding: 0 0 12px 9px; background: #fff; }
.titlebar h1 { flex: 1; padding-left: 6px; }
.winbtns { display: flex; padding-right: 1px; }
.winbtns button { width: 58px; display: grid; place-items: center; }
.winbtns svg { width: 12px; height: 14px; }
.menu { display: flex; height: 26px; padding-left: 1px; background: #fff; }
.menu button { padding: 0 10px; }

.toolbar { display: flex; height: 81px; padding: 6px 0 0 5px; border-bottom: 2px solid #b5b5b5; }
.group { display: flex; align-items: flex-start; justify-content: space-between; height: 68px; border-right: 2px solid #d0d0d0; }
.group button { display: flex; flex-direction: column; align-items: center; padding: 8px 8px 0; height: 62px; gap: 4px; white-space: nowrap; }
.group button svg { width: 30px; height: 30px; }
.group button:disabled { color: #8a8a8a; }
.group .on, .gtools .on, .vtools .on { background: #c2dcf2; outline: 1px solid #8cc4f0; outline-offset: -1px; }
.group .on { margin-top: 3px; }
.group button.on { padding-top: 7px; }
.g-file { width: 158px; padding-left: 6px; border-left: 2px dotted #b8b8b8; }
.g-run { width: 113px; padding: 0 3px; }
.group .caret { padding: 32px 0 0; }
.group button .caret-ic { width: 10px; height: 6px; }
.g-undo { width: 112px; padding: 0 2px 0 5px; }
.g-nav { width: 263px; padding: 0 3px 0 5px; }
.g-zoom { width: 468px; padding-left: 10px; }
.group.g-zoom { justify-content: flex-start; }
.g-add { width: 399px; padding: 0 1px 0 5px; }
.g-align { width: 130px; padding: 0 2px 0 4px; }
.pct { width: 45px; height: 27px; margin: 21px 10px 0 0; text-align: center; background: #fff; border: 1px solid #707070; }
.group .round { padding: 25px 0 0; }
.group .round svg { width: 20px; height: 20px; }
.slider { width: 106px; padding-top: 20px; margin: 0 10px; }
.slider + .round { margin-right: 2px; }
.ticks { display: flex; justify-content: space-between; padding: 0 6px; height: 6px; }
.ticks i { width: 1px; height: 5px; background: #000; }
.slider input { appearance: none; display: block; width: 100%; height: 22px; }
.slider input::-webkit-slider-runnable-track { height: 5px; background: #e6eaea; border: 1px solid #d2d2d2; }
.slider input::-webkit-slider-thumb { appearance: none; width: 11px; height: 21px; margin-top: -9px; background: #0078d7; clip-path: polygon(50% 0, 100% 25%, 100% 100%, 0 100%, 0 25%); }
.more { font-size: 16px; color: #333; }
.toolbar > .more { margin-left: auto; padding-right: 4px; }

.docks { flex: 1; min-height: 0; display: grid; grid-template-columns: 318px minmax(0, 868fr) minmax(0, 530fr); column-gap: 6px; }
.col { display: flex; flex-direction: column; min-width: 0; min-height: 0; }
.dock-head { display: flex; align-items: center; flex: none; height: 26px; padding: 1px 7px 0 5px; gap: 14px; background: #d9d9d9; border: 1px solid #b6b6b6; }
.dock-head h2 { flex: 1; padding-top: 2px; }
.dock-head button { color: #333; }
.dock-head svg { width: 12px; height: 12px; }
.panel { display: flex; margin: 6px 2px 0 3px; min-height: 0; background: #fff; border: 1px solid #828790; border-left: 0; overflow: hidden; }
.nav-panel { flex: 333 1 0; }
.gal-panel { flex: 388 1 0; border-top: 0; }
.second { margin-top: 9px; }
.third { margin-top: 7px; }
.tree { flex: 1; min-width: 0; padding-top: 1px; overflow: hidden; }
.gal-panel .tree { padding-top: 2px; }
.tree li { display: grid; grid-template-columns: 30px 20px 1fr; align-items: center; height: 25px; white-space: nowrap; }
.tree span { padding-left: 7px; }
.tree .sub { padding-left: 25px; }
.tree .sel { background: linear-gradient(to right, #fff 26px, #d9d9d9 26px); }
.ch { width: 12px; height: 12px; margin-left: 7px; color: #a0a0a0; }
.ch.open { color: #404040; }
.pink { fill: #f0bcdc; stroke: #7a4a68; stroke-width: 1; }
.blue { --c1: #5b96d2; --c2: #86a9cf; }
.green { --c1: #63cc63; --c2: #a9dba9; }
.teal { --c1: #54bcc6; --c2: #a7dde0; }
.gal-search { display: flex; gap: 6px; margin: 3px 7px 5px 3px; }
.field { display: flex; align-items: center; flex: 1; height: 26px; background: #fff; border: 1px solid #707070; padding: 0 5px 0 3px; }
.field .ic20 { width: 17px; height: 17px; }
.gal-search .field { padding-left: 12px; }
.field input { flex: 1; padding-left: 12px; width: 0; }
.field input::placeholder { color: #868686; opacity: 1; }
.dr { width: 12px; height: 12px; }

.sb { display: flex; align-items: center; background: #f0f0f0; color: #505050; }
.sb svg { width: 12px; height: 12px; margin: 4px; }
.sb.v { flex-direction: column; width: 20px; }
.sb.h { height: 20px; }
.track { flex: 1; min-height: 0; display: flex; }
.v .track { flex-direction: column; width: 20px; padding-right: 1px; }
.h .track { height: 20px; padding-bottom: 1px; }
.thumb { background: #cdcdcd; width: 100%; height: 100%; }
.sb-nav .thumb { height: 86%; }
.sb-cv .thumb { height: 47%; }
.sb-ch .thumb { width: 58%; margin-left: 16%; }
.sb-tv .thumb { height: 12%; margin-top: 360%; }
.sb-th .thumb { width: 12%; margin-left: 67%; }
.sb-pv .thumb { height: 40%; }
.sb-ph .thumb { width: 79%; }

.doc-tabs { display: flex; align-items: flex-end; height: 29px; padding-left: 2px; }
.doc-tab { display: flex; align-items: center; justify-content: space-between; border: 1px solid #d9d9d9; border-bottom: 0; }
.doc-tab svg { width: 12px; height: 12px; }
.doc-tab.start { width: 84px; height: 27px; padding: 2px 10px 0 12px; border-bottom: 1px solid #a0a0a0; }
.doc-tab.active { width: 91px; height: 29px; padding: 1px 13px 0 17px; background: #fff; }
.canvas-frame { flex: 369 1 0; min-height: 0; display: grid; padding: 0 4px 4px 1px; border: 1px solid #dcdcdc; border-width: 0 1px 1px; background: #fafafa; }
.canvas-pane { display: grid; grid-template: minmax(0, 1fr) 20px / minmax(0, 1fr) 20px; border: 1px solid #828790; border-top: 0; background: #fff; }
.canvas { position: relative; overflow: hidden; background: #fff; }
.canvas-pane .sb-cv { padding-top: 4px; }
.canvas-pane .sb-ch { grid-column: 1 / 3; padding-right: 20px; }
.wires { position: absolute; inset: 0; width: 100%; height: 100%; }
.node { position: absolute; display: flex; align-items: center; border: 1px solid #1f2d35; border-radius: 7px; background: #97bfe8; height: 28px; font-size: 15px; white-space: nowrap; }
.node span { flex: 1; padding-top: 1px; }
.node.out { height: 24px; font-size: 13px; background: #b5d3f0; padding: 0 5px 0 8px; gap: 6px; border-radius: 8px; }
.ic-tri { width: 9px; height: 13px; fill: #8aa5bd; stroke: #4c6479; }
.ic-tri.brown { fill: #bda778; stroke: #6e6045; }
.gear-o { fill: none; stroke: #8a754c; }
.gear-b { fill: none; stroke: #3f648c; }
.tiff { left: 40px; top: 90px; width: 173px; background: #fdd694; padding: 0 4px 0 20px; gap: 5px; }
.tiff .gear-o { margin-right: -3px; }
.disc { position: absolute; left: 14px; top: 83px; width: 44px; height: 44px; }
.port { position: absolute; width: 14px; height: 14px; }
.p1 { left: 210px; top: 97px; } .p2 { left: 326px; top: 135px; } .p3 { left: 494px; top: 162px; }
.p4 { left: 563px; top: 135px; } .p5 { left: 751px; top: 162px; } .p6 { left: 751px; top: 187px; }
.cnt { position: absolute; }
.c1 { left: 265px; top: 114px; } .c2 { left: 527px; top: 146px; } .c3 { left: 777px; top: 159px; }
.rep { left: 336px; top: 128px; width: 182px; padding: 0 4px 0 7px; }
.rep-out { left: 354px; top: 157px; width: 144px; }
.mini { position: absolute; left: 557px; top: 86px; width: 63px; height: 32px; display: flex; align-items: center; justify-content: space-around; background: #f0f0f0; border: 1px solid #cfcfcf; }
.halo { position: absolute; left: 553px; top: 123px; width: 225px; height: 87px; border-radius: 8px; background: #75a9ff; }
.rpe { left: 572px; top: 128px; width: 202px; padding: 0 3px 0 7px; background: repeating-conic-gradient(#5d7185 0 25%, #c5d2df 0 50%) 0 0 / 2px 2px repeat-y, repeating-conic-gradient(#5d7185 0 25%, #c5d2df 0 50%) 100% 0 / 2px 2px repeat-y, #97bfe8; }
.rpe-out { left: 591px; top: 157px; width: 164px; }
.rpe-rej { left: 591px; top: 181px; width: 164px; }

.preview { flex: 366 1 0; min-height: 0; display: grid; grid-template-columns: 34px minmax(0, 483fr) minmax(0, 338fr); column-gap: 7px; padding-top: 5px; }
.vtools { display: flex; flex-direction: column; padding-left: 2px; gap: 1px; }
.vtools button { display: grid; place-items: center; width: 29px; height: 27px; flex: none; }
.vtools hr { width: 22px; height: 2px; margin: 2px 0 2px 3px; border: 0; background: #d0d0d0; flex: none; }
.vtools hr + button { margin-top: 2px; }
.vtools .app { height: 20px; }
.box { position: relative; display: flex; flex-direction: column; min-height: 0; border: 1px solid #dcdcdc; margin: 0 0 1px; }
.box legend { margin-left: 1px; padding: 0 3px; }
.tbl { padding: 7px 6px 0 7px; }
.row1 { display: flex; gap: 9px; }
.combo { display: grid; grid-template-columns: 1fr 20px; align-items: center; height: 26px; background: #e2e2e2; border: 1px solid #adadad; }
.combo select { appearance: none; grid-area: 1 / 1 / 2 / 3; width: 100%; height: 100%; padding-left: 5px; }
.combo .dr { grid-area: 1 / 2; pointer-events: none; margin-left: 3px; }
.combo.white { flex: 1; height: 27px; background: #fff; border-color: #707070; }
.push { width: 92px; height: 28px; background: #e1e1e1; border: 1px solid #adadad; }
.grid-box { flex: 1; min-height: 0; margin-top: 9px; display: grid; grid-template: minmax(0, 1fr) 21px / minmax(0, 1fr) 21px; background: #fff; border: 1px solid #828790; border-width: 0 1px 1px 0; }
.grid-box .sb-th { grid-column: 1 / 3; padding-right: 20px; }
.grid { width: 100%; table-layout: fixed; border-collapse: separate; border-spacing: 0; }
.cn { width: 27px; } .ca { width: 138px; } .cb { width: 137px; }
.grid th, .grid td { height: 30px; padding: 0; border-right: 1px solid #dcdcdc; border-bottom: 1px solid #d6d6d6; white-space: nowrap; overflow: hidden; font-weight: 400; }
.grid thead th { height: 31px; padding: 2px 0 0 5px; text-align: left; font-weight: 700; border-bottom: 0; }
.grid tbody th { font-weight: 700; border-bottom: 0; padding-right: 4px; text-align: right; }
.grid td { text-align: right; padding-right: 4px; }
.grid td:last-child { padding-right: 1px; }
.grid tr > :last-child { border-right: 0; }
.grid tbody tr:nth-child(even) td { background: #e8e7e3; }
.grid tbody tr.s1:nth-child(n) td { background: #00dfba; color: #e6fffa; border-color: #a5efe2; }
.grid tbody tr.s2:nth-child(n) td { background: #00b294; color: #e0f8f3; border-color: #a5efe2; }
.grid .s1 th, .grid .s2 th { background: #bcdcf4; }
.row3 { display: flex; align-items: center; gap: 7px; margin: 7px 0 6px; white-space: nowrap; }
.row3 .field, .row3 .combo { flex: 0 0 146px; }
.row3 .count { flex: 1; text-align: right; }

.gfx { padding: 7px 0 0 8px; }
.gtools { display: flex; height: 52px; margin-right: 3px; }
.gtools button { display: flex; flex-direction: column; align-items: center; gap: 3px; width: 35px; padding-top: 7px; }
.gtools button:disabled { color: #8a8a8a; }
.gtools .slide { width: 83px; }
.gtools .wide { width: 56px; margin-left: 8px; }
.gtools .vsep { width: 2px; background: #d0d0d0; margin: 3px 13px 5px 2px; }
.gtools .more { width: 20px; padding-top: 16px; margin-left: auto; }
.map-frame { flex: 1; min-height: 0; margin: 5px 9px 0 0; padding: 1px 2px 4px 1px; background: #fff; border: 1px solid #dcdcdc; display: grid; }
.map { width: 100%; height: 100%; min-height: 0; border: 1px solid #6f7780; background: linear-gradient(#fff 52%, #e6eaea 72%, #c6d1d1); }
.coords { display: flex; align-items: center; height: 28px; margin: 6px 0; padding-left: 17px; }
.coords span { height: 28px; line-height: 28px; padding: 0 2px 0 6px; }
.coords span + span { border-left: 1px solid #d0d0d0; }
.coords .k { padding: 0 7px 0 6px; }
.coords .n + .k { padding-left: 8px; }

.bottom-tabs { display: flex; align-items: flex-start; height: 31px; border-top: 1px solid #a0a0a0; }
.btab { height: 28px; border: 1px solid #d9d9d9; border-top: 0; }
.btab.active { height: 30px; margin-top: -1px; background: #fff; }
.mid-tabs .active { width: 126px; }
.btab.log { width: 128px; border-right: 0; }
.feat-tabs { padding-left: 3px; }
.btab.pe { width: 136px; }
.btab.fi { width: 162px; }

.feat-bar { display: flex; align-items: center; height: 50px; padding: 9px 0 0 11px; white-space: nowrap; }
.feat-bar input { width: 16px; height: 26px; margin: 0 8px 0 7px; text-align: center; background: #fff; border: 1px solid #707070; }
.feat-bar button { width: 6px; margin-right: 24px; }
.feat-bar .prev { margin-left: 19px; }
.feat-bar svg { width: 6px; height: 10px; }
.feat-bar .in { margin-right: 11px; }
.prop-box { flex: 1; min-height: 0; margin: 0 12px 0 11px; display: grid; grid-template: minmax(0, 1fr) 21px / minmax(0, 1fr) 20px; background: #fff; border: 1px solid #828790; border-width: 0 1px 1px 0; }
.prop-box .sb-ph { grid-column: 1 / 3; padding-right: 20px; }
.props { width: 100%; table-layout: fixed; border-collapse: collapse; }
.cp { width: 225px; } .ct { width: 125px; }
.props th, .props td { padding: 0 0 0 5px; text-align: left; font-weight: 400; white-space: nowrap; overflow: hidden; }
.props th { height: 31px; padding-top: 2px; border-right: 1px solid #dcdcdc; }
.props th:last-child { border-right: 0; }
.props td:first-child { padding-left: 54px; }
.props td { height: 22px; line-height: 20px; }
.props tbody tr:nth-child(odd) td { height: 23px; }
.props tbody tr:nth-child(even) { background: #e8e7e3; }
.props .cat td:first-child { padding: 0; }
.cat div { display: grid; grid-template-columns: 28px 26px 152px 20px; align-items: center; height: 22px; }
.cat .ex { width: 14px; height: 18px; fill: #f4f4f4; }
.cat .filled { fill: #bd8a52; }
.dt { display: flex; align-items: center; justify-content: space-between; padding-right: 9px; }
.dt svg { width: 20px; height: 14px; }
.feat-filter { display: flex; align-items: center; gap: 9px; margin: 8px 38px 11px 11px; }
.feat-filter .combo { width: 104px; }

.status { display: flex; justify-content: space-between; height: 12px; padding: 2px 22px 0 568px; border-top: 1px solid #8a8a8a; }
.status i { width: 1px; background: #d0d0d0; }
```
FILE: map.js
```js
// Scatters town, road and contour pixels over the outline of Great Britain.
const outline = [[140,377],[350,377],[365,415],[430,398],[525,400],[520,430],[480,490],[430,520],[480,530],[520,560],[545,600],[575,630],[625,650],[660,700],[690,765],[740,765],[795,790],[802,805],[770,850],[720,872],[780,895],[760,915],[690,940],[560,948],[440,935],[400,970],[330,970],[310,955],[262,998],[255,980],[300,935],[340,903],[400,895],[350,880],[320,862],[265,868],[260,850],[330,830],[345,790],[305,770],[310,740],[400,740],[430,720],[430,685],[400,670],[390,600],[385,622],[280,630],[270,595],[335,570],[325,525],[290,525],[240,590],[210,580],[240,520],[175,490],[205,430]];
let seed = 20232;
const rnd = () => { seed = (seed * 1664525 + 1013904223) % 4294967296; return seed / 4294967296; };
const inside = (x, y) => {
  let hit = false;
  for (let i = 0, j = outline.length - 1; i < outline.length; j = i++) {
    const [a, b] = outline[i], [c, d] = outline[j];
    if ((b > y) !== (d > y) && x < (c - a) * (y - b) / (d - b) + a) hit = !hit;
  }
  return hit;
};
const paths = {};
const dot = (color, x, y, s) => { paths[color] = (paths[color] || '') + `M${x.toFixed(1)} ${y.toFixed(1)}h${s}v${s}h${-s}z`; };
const pick = list => list[Math.floor(rnd() * list.length)];
const pale = ['#fbe6cf', '#f9dfc2', '#f4f1cf', '#fdf6ea', '#ffffff'];
const white = ['#ffffff', '#fbfbf8', '#f6f4ea', '#ffffff'];
const ink = ['#3a3a3a', '#555555', '#2b2b2b', '#8d8d8d', '#c9569a', '#4a9f78', '#f0e64a', '#f3ec86', '#6ab8e6', '#ecc4a0', '#bdbdbd'];
for (let i = 0; i < 8000; i++) {
  const x = 140 + rnd() * 665, y = 377 + rnd() * 622;
  const west = x < 225 && y < 600;
  if (inside(x, y) && (!west || rnd() < 0.25)) dot(pick(y < 700 && x < 560 || x < 430 && y > 740 && y < 890 ? pale : white), x - 4, y - 4, 10);
}
for (let i = 0; i < 10500; i++) {
  const x = 140 + rnd() * 665, y = 377 + rnd() * 622;
  if (!inside(x, y)) continue;
  if (x < 225 && y < 600 && rnd() < 0.6) continue;
  const highland = y < 500 && x > 235 && x < 440;
  if (highland && rnd() < 0.6) dot('#f4d2ae', x, y, 8);
  else if (rnd() < (y > 700 ? 0.95 : 0.7)) dot(pick(ink), x, y, rnd() < 0.5 ? 4 : 6);
}
[[100,405],[95,440],[85,455],[180,550],[190,635],[210,640],[700,625],[680,635],[740,660],[720,685],[595,550],[630,548],[615,445],[820,730],[840,795],[800,865],[830,860],[730,595],[720,980],[660,980],[605,1002],[415,1002],[315,1002],[235,965],[100,995],[110,1008],[175,1002],[195,1005],[220,885],[255,915],[285,800],[290,725],[330,640],[350,655],[160,492],[55,500],[535,440],[565,412],[615,390]].forEach(([x, y]) => dot('#6db6e8', x, y, 5));
for (let i = 0; i < 22; i++) dot(pick(['#555555', '#c9569a', '#8d8d8d']), 88 + rnd() * 25, 400 + rnd() * 60, 5);
document.getElementById('land').innerHTML = Object.entries(paths).map(([c, d]) => `<path fill="${c}" d="${d}"/>`).join('');
```
